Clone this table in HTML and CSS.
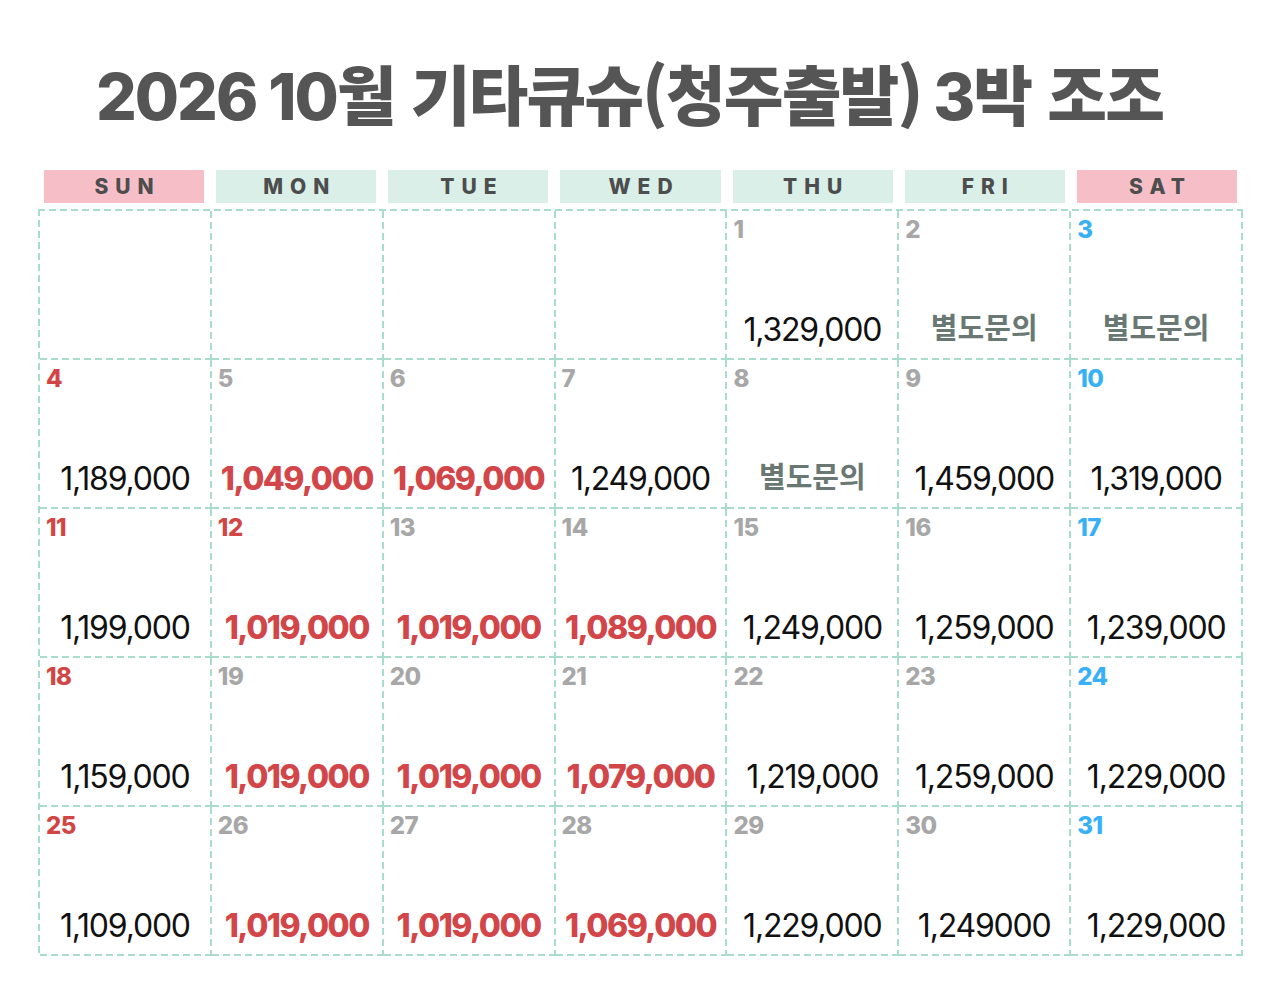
FILE: index.html
```html
<!DOCTYPE html>
<html lang="ko">
<head>
<meta charset="utf-8">
<title>2026 10월 기타큐슈(청주출발) 3박 조조</title>
<link rel="stylesheet" href="styles.css">
</head>
<body>
<div class="page">
  <h1 class="title">2026 10<span class="ko">월 기타큐슈(청주출발)</span> 3<span class="ko">박 조조</span></h1>
  <div class="weekdays">
    <div class="wd"><span class="wd-label pink">SUN</span></div>
    <div class="wd"><span class="wd-label mint">MON</span></div>
    <div class="wd"><span class="wd-label mint">TUE</span></div>
    <div class="wd"><span class="wd-label mint">WED</span></div>
    <div class="wd"><span class="wd-label mint">THU</span></div>
    <div class="wd"><span class="wd-label mint">FRI</span></div>
    <div class="wd"><span class="wd-label pink">SAT</span></div>
  </div>
  <div class="grid">
    <div class="cell"></div>
    <div class="cell"></div>
    <div class="cell"></div>
    <div class="cell"></div>
    <div class="cell"><span class="day">1</span><span class="price">1,329,000</span></div>
    <div class="cell"><span class="day">2</span><span class="ask">별도문의</span></div>
    <div class="cell"><span class="day sat">3</span><span class="ask">별도문의</span></div>

    <div class="cell"><span class="day sun">4</span><span class="price">1,189,000</span></div>
    <div class="cell"><span class="day">5</span><span class="price hot">1,049,000</span></div>
    <div class="cell"><span class="day">6</span><span class="price hot">1,069,000</span></div>
    <div class="cell"><span class="day">7</span><span class="price">1,249,000</span></div>
    <div class="cell"><span class="day">8</span><span class="ask">별도문의</span></div>
    <div class="cell"><span class="day">9</span><span class="price">1,459,000</span></div>
    <div class="cell"><span class="day sat">10</span><span class="price">1,319,000</span></div>

    <div class="cell"><span class="day sun">11</span><span class="price">1,199,000</span></div>
    <div class="cell"><span class="day sun">12</span><span class="price hot">1,019,000</span></div>
    <div class="cell"><span class="day">13</span><span class="price hot">1,019,000</span></div>
    <div class="cell"><span class="day">14</span><span class="price hot">1,089,000</span></div>
    <div class="cell"><span class="day">15</span><span class="price">1,249,000</span></div>
    <div class="cell"><span class="day">16</span><span class="price">1,259,000</span></div>
    <div class="cell"><span class="day sat">17</span><span class="price">1,239,000</span></div>

    <div class="cell"><span class="day sun">18</span><span class="price">1,159,000</span></div>
    <div class="cell"><span class="day">19</span><span class="price hot">1,019,000</span></div>
    <div class="cell"><span class="day">20</span><span class="price hot">1,019,000</span></div>
    <div class="cell"><span class="day">21</span><span class="price hot">1,079,000</span></div>
    <div class="cell"><span class="day">22</span><span class="price">1,219,000</span></div>
    <div class="cell"><span class="day">23</span><span class="price">1,259,000</span></div>
    <div class="cell"><span class="day sat">24</span><span class="price">1,229,000</span></div>

    <div class="cell"><span class="day sun">25</span><span class="price">1,109,000</span></div>
    <div class="cell"><span class="day">26</span><span class="price hot">1,019,000</span></div>
    <div class="cell"><span class="day">27</span><span class="price hot">1,019,000</span></div>
    <div class="cell"><span class="day">28</span><span class="price hot">1,069,000</span></div>
    <div class="cell"><span class="day">29</span><span class="price">1,229,000</span></div>
    <div class="cell"><span class="day">30</span><span class="price">1,249000</span></div>
    <div class="cell"><span class="day sat">31</span><span class="price">1,229,000</span></div>
  </div>
</div>
</body>
</html>
```

FILE: styles.css
```css
* { box-sizing: border-box; }
html, body { margin: 0; padding: 0; background: #ffffff; }
body {
  font-family: "Inter", "Noto Sans CJK KR", sans-serif;
  color: #111;
}
.page {
  width: 1280px;
  height: 989px;
  padding: 0 37px 0 38px;
}
.title {
  margin: 0;
  padding: 47px 22px 0 0;
  height: 162px;
  text-align: center;
  font-family: "Inter", "Noto Sans CJK KR", sans-serif;
  font-weight: 800;
  font-size: 64px;
  line-height: 90px;
  letter-spacing: -2px;
  color: #555555;
  white-space: nowrap;
}
.title .ko {
  font-family: "Noto Sans CJK KR", sans-serif;
  font-size: 65px;
  letter-spacing: -2px;
}
.weekdays {
  display: grid;
  grid-template-columns: repeat(7, 1fr);
  padding-top: 8px;
  margin-bottom: 6px;
}
.wd {
  padding: 0 6px;
}
.wd-label {
  display: flex;
  align-items: center;
  justify-content: center;
  height: 33px;
  font-weight: 800;
  font-size: 21px;
  letter-spacing: 7px;
  padding-left: 7px;
  color: #4d4d4d;
}
.pink { background: #f6bfc8; }
.mint { background: #d9efe8; }
.grid {
  display: grid;
  grid-template-columns: repeat(7, 1fr);
  grid-auto-rows: 149px;
  padding: 2px 0 0 2px;
  background:
    repeating-linear-gradient(to right, #a9dccc 0 7px, transparent 7px 11px) left top / 100% 2px no-repeat,
    repeating-linear-gradient(to bottom, #a9dccc 0 7px, transparent 7px 11px) left top / 2px 100% no-repeat;
}
.cell {
  display: flex;
  flex-direction: column;
  padding: 6px 2px 10px 6px;
  background:
    repeating-linear-gradient(to bottom, #a9dccc 0 7px, transparent 7px 11px) right top / 2px 100% no-repeat,
    repeating-linear-gradient(to right, #a9dccc 0 7px, transparent 7px 11px) left bottom / 100% 2px no-repeat;
}
.day {
  font-weight: 800;
  font-size: 24px;
  line-height: 26px;
  color: #a7a7a7;
  letter-spacing: -0.5px;
}
.day.sun { color: #d24545; }
.day.sat { color: #38b0f5; }
.price {
  margin-top: auto;
  text-align: center;
  font-size: 32px;
  line-height: 40px;
  font-weight: 400;
  letter-spacing: -1.2px;
  color: #111;
  padding-right: 6px;
}
.price.hot {
  font-weight: 800;
  color: #d24548;
  letter-spacing: -1.5px;
}
.ask {
  margin-top: auto;
  text-align: center;
  font-family: "Noto Sans CJK KR", sans-serif;
  font-weight: 700;
  font-size: 29px;
  line-height: 40px;
  color: #6a7873;
  padding-right: 6px;
  padding-bottom: 4px;
}
```
